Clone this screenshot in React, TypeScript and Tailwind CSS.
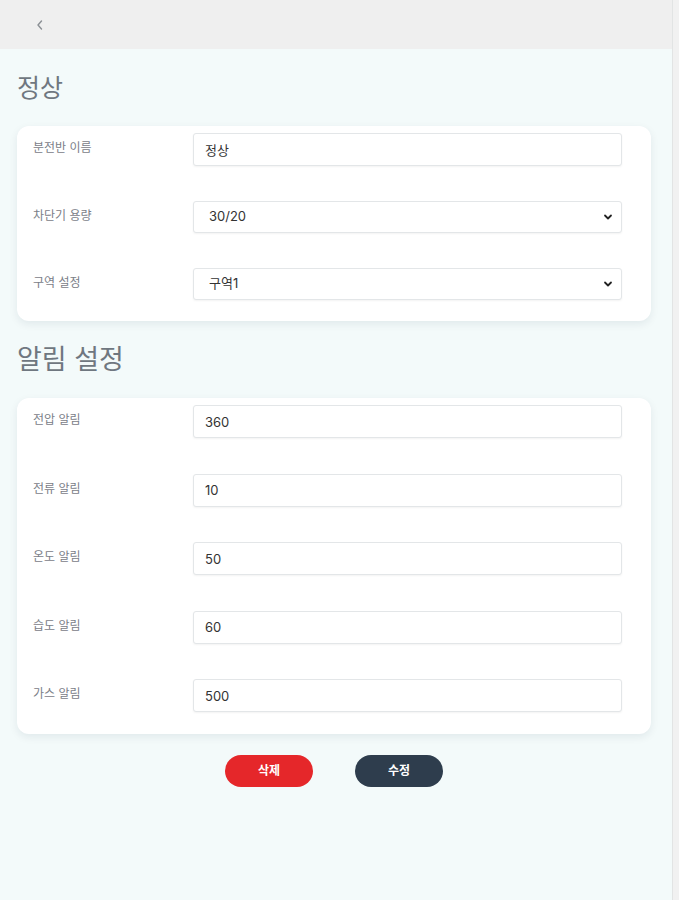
import type { ReactNode } from "react";

const font = { fontFamily: "Inter, 'Noto Sans CJK KR', sans-serif" };

function Chevron() {
  return (
    <svg width="10" height="10" viewBox="0 0 10 10" className="pointer-events-none absolute right-[9px] top-1/2 -translate-y-1/2">
      <path d="M2 3.5 L5 6.5 L8 3.5" fill="none" stroke="#222" strokeWidth="1.8" strokeLinecap="round" strokeLinejoin="round" />
    </svg>
  );
}

function Row({ label, children, gap }: { label: string; children: ReactNode; gap?: string }) {
  return (
    <div className={`flex items-start ${gap ?? ""}`}>
      <div className="w-[160px] shrink-0 pt-[6px] text-[12px] text-[#7b8088]">{label}</div>
      <div className="flex-1">{children}</div>
    </div>
  );
}

function TextField({ value }: { value: string }) {
  return (
    <input
      defaultValue={value}
      className="h-[33px] w-full rounded-[3px] border border-[#e3e6e8] bg-white px-[11px] text-[13px] text-[#333] shadow-[0_1px_2px_rgba(0,0,0,0.05)] outline-none"
    />
  );
}

function SelectField({ value, options }: { value: string; options: string[] }) {
  return (
    <div className="relative">
      <select
        defaultValue={value}
        className="h-[32px] w-full appearance-none rounded-[3px] border border-[#e3e6e8] bg-white px-[15px] text-[13px] text-[#333] shadow-[0_1px_2px_rgba(0,0,0,0.05)] outline-none"
      >
        {options.map((o) => (
          <option key={o}>{o}</option>
        ))}
      </select>
      <Chevron />
    </div>
  );
}

export default function App() {
  return (
    <div className="flex min-h-[900px] w-full" style={font}>
      <div className="flex w-[672px] flex-col bg-[#f3fafa]">
        <header className="flex h-[49px] items-center bg-[#efefef] pl-[35px]">
          <svg width="10" height="12" viewBox="0 0 10 12">
            <path d="M6.5 2 L3 6 L6.5 10" fill="none" stroke="#8a8f94" strokeWidth="1.4" strokeLinecap="round" strokeLinejoin="round" />
          </svg>
        </header>

        <main className="pl-[17px] pr-[21px]">
          <h1 className="mt-[23px] text-[25px] leading-[32px] text-[#6f7780]">정상</h1>

          <section className="mt-[22px] rounded-[12px] bg-white pb-[21px] pl-[16px] pr-[29px] pt-[7px] shadow-[0_3px_8px_rgba(0,40,60,0.08)]">
            <Row label="분전반 이름" gap="mb-[35px]">
              <TextField value="정상" />
            </Row>
            <Row label="차단기 용량" gap="mb-[35px]">
              <SelectField value="30/20" options={["30/20", "50/30"]} />
            </Row>
            <Row label="구역 설정">
              <SelectField value="구역1" options={["구역1", "구역2"]} />
            </Row>
          </section>

          <h2 className="mt-[22px] text-[27px] leading-[34px] text-[#6f7780]">알림 설정</h2>

          <section className="mt-[21px] rounded-[12px] bg-white pb-[22px] pl-[16px] pr-[29px] pt-[7px] shadow-[0_3px_8px_rgba(0,40,60,0.08)]">
            <Row label="전압 알림" gap="mb-[35.5px]">
              <TextField value="360" />
            </Row>
            <Row label="전류 알림" gap="mb-[35.5px]">
              <TextField value="10" />
            </Row>
            <Row label="온도 알림" gap="mb-[35.5px]">
              <TextField value="50" />
            </Row>
            <Row label="습도 알림" gap="mb-[35.5px]">
              <TextField value="60" />
            </Row>
            <Row label="가스 알림">
              <TextField value="500" />
            </Row>
          </section>

          <div className="mt-[21px] flex justify-center gap-[42px]">
            <button className="h-[32px] w-[88px] rounded-full bg-[#e5272a] text-[12px] font-bold text-white">삭제</button>
            <button className="h-[32px] w-[88px] rounded-full bg-[#2e3d4d] text-[12px] font-bold text-white">수정</button>
          </div>
        </main>
      </div>
      <div className="w-[7px] border-l border-[#e2e4e4] bg-[#f1f1f1]" />
    </div>
  );
}
